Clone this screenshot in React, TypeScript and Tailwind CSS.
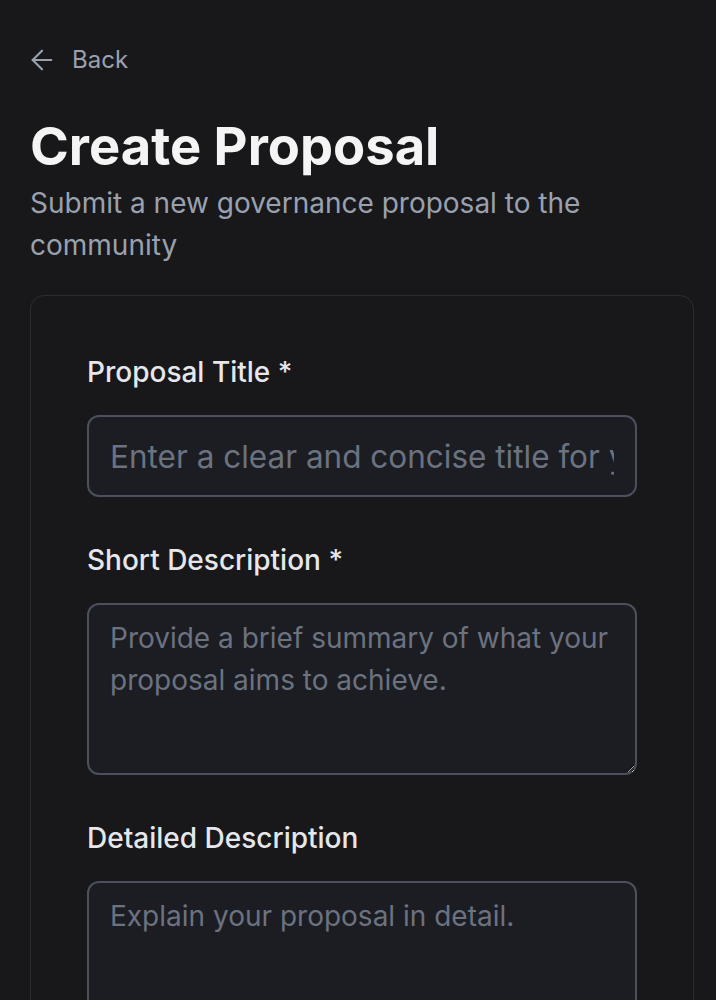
import { ArrowLeft } from "lucide-react";

function Label({ children }: { children: React.ReactNode }) {
  return <label className="block text-[28px] leading-[40px] font-medium text-gray-200">{children}</label>;
}

export default function App() {
  return (
    <div className="min-h-screen bg-[#18181b] text-zinc-100 font-['Inter',sans-serif] overflow-hidden">
      <div className="pl-[30px] pr-[22px] pt-[40px]">
        {/* Back */}
        <button className="flex items-center gap-[14px] h-[40px] text-[24px] text-gray-400">
          <ArrowLeft className="w-[32px] h-[32px] -ml-[4px]" strokeWidth={1.6} />
          <span>Back</span>
        </button>

        {/* Heading */}
        <h1 className="mt-[35px] text-[52.5px] leading-[63px] font-bold text-zinc-100">Create Proposal</h1>
        <p className="mt-[4px] text-[28px] leading-[42px] text-gray-400">
          Submit a new governance proposal to the community
        </p>

        {/* Form card */}
        <div className="mt-[29px] rounded-[14px] border border-[#2b2c33] px-[56px] pt-[56px] pb-[40px]">
          <div className="flex flex-col gap-[43px]">
            <div className="flex flex-col gap-[23px]">
              <Label>Proposal Title *</Label>
              <input
                placeholder="Enter a clear and concise title for your proposal"
                className="h-[82px] w-full rounded-[12px] border-2 border-[#4b505c] bg-[#1c1d22] px-[21px] text-[31.5px] text-zinc-100 placeholder:text-[#6b7280] outline-none"
              />
            </div>
            <div className="flex flex-col gap-[23px]">
              <Label>Short Description *</Label>
              <textarea
                placeholder="Provide a brief summary of what your proposal aims to achieve."
                className="h-[172px] w-full rounded-[12px] border-2 border-[#4b505c] bg-[#1c1d22] px-[21px] py-[12px] text-[28px] leading-[42px] text-zinc-100 placeholder:text-[#6b7280] outline-none"
              />
            </div>
            <div className="flex flex-col gap-[23px]">
              <Label>Detailed Description</Label>
              <textarea
                placeholder="Explain your proposal in detail."
                className="h-[300px] w-full rounded-[12px] border-2 border-[#4b505c] bg-[#1c1d22] px-[21px] py-[12px] text-[28px] leading-[42px] text-zinc-100 placeholder:text-[#6b7280] outline-none"
              />
            </div>
          </div>
        </div>
      </div>
    </div>
  );
}
